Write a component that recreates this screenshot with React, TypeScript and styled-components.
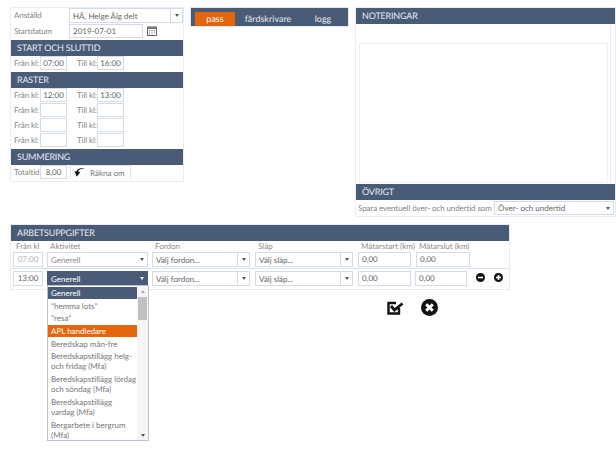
import React, { FunctionComponent } from 'react';
import styled, { createGlobalStyle } from 'styled-components';

const GlobalStyle = createGlobalStyle`
  html, body {
    margin: 0;
    padding: 0;
    background: #fff;
    overflow: hidden;
  }
  body {
    font-family: Lato, "Open Sans", "Liberation Sans", sans-serif;
    font-size: 8px;
    color: #6b6b6b;
    text-rendering: geometricPrecision;
  }
`;

const Page = styled.div`
  width: 616px;
  height: 459px;
  box-sizing: border-box;
  padding: 7px 0 0 10px;
  overflow: hidden;
`;

const TopRow = styled.div`
  display: flex;
  align-items: flex-start;
  gap: 6px;
`;

const Panel = styled.div<{ $width: number }>`
  box-sizing: border-box;
  width: ${p => p.$width}px;
  flex: none;
  border: 1px solid #e9edf1;
  background: #fff;
`;

const Header = styled.div`
  box-sizing: border-box;
  height: 16px;
  line-height: 16px;
  padding-left: 6px;
  background: #4a5b78;
  color: #e6eaf0;
  font-size: 9px;
  letter-spacing: -0.2px;
`;

const FieldRow = styled.div<{ $height?: number }>`
  display: flex;
  align-items: flex-start;
  height: ${p => p.$height ?? 15}px;
`;

const Label = styled.span<{ $width: number; $indent?: number }>`
  width: ${p => p.$width}px;
  padding-left: ${p => p.$indent ?? 0}px;
  box-sizing: border-box;
  flex: none;
  line-height: 14px;
  white-space: nowrap;
  font-size: 8px;
  letter-spacing: -0.1px;
  color: #858585;
`;

const Field = styled.div<{ $width: number; $height?: number; $muted?: boolean }>`
  box-sizing: border-box;
  flex: none;
  width: ${p => p.$width}px;
  height: ${p => p.$height ?? 14}px;
  line-height: ${p => (p.$height ?? 14) - 2}px;
  padding-left: 3px;
  border: 1px solid #d5dbe6;
  background: #fff;
  font-size: 8px;
  color: ${p => (p.$muted ? '#b0b0b0' : '#666')};
  white-space: nowrap;
`;

const TimeField = styled(Field)`
  text-align: center;
  padding-left: 0;
`;

const Arrow = styled.span<{ $light?: boolean; $up?: boolean }>`
  width: 0;
  height: 0;
  border-left: 2.5px solid transparent;
  border-right: 2.5px solid transparent;
  border-top: ${p => (p.$up ? '0' : `3px solid ${p.$light ? '#fff' : '#555'}`)};
  border-bottom: ${p => (p.$up ? '3px solid #aaa' : '0')};
`;

const SelectBox = styled.div<{ $width: number; $height?: number; $dark?: boolean; $muted?: boolean }>`
  box-sizing: border-box;
  flex: none;
  display: flex;
  align-items: stretch;
  width: ${p => p.$width}px;
  height: ${p => p.$height ?? 15}px;
  border: 1px solid ${p => (p.$dark ? '#4a5b78' : '#d5dbe6')};
  background: ${p => (p.$dark ? '#4a5b78' : '#fff')};
  color: ${p => (p.$dark ? '#fff' : p.$muted ? '#8a8a8a' : '#666')};
  font-size: 8px;
`;

const SelectText = styled.span`
  flex: 1;
  padding-left: 3px;
  display: flex;
  align-items: center;
  white-space: nowrap;
`;

const SelectButton = styled.span<{ $split?: boolean }>`
  flex: none;
  width: 11px;
  display: flex;
  align-items: center;
  justify-content: center;
  border-left: ${p => (p.$split ? '1px solid #d5dbe6' : '0')};
`;

const IconSlot = styled.span`
  display: inline-flex;
  margin: 2px 0 0 4px;
`;

const RecalcButton = styled.div`
  box-sizing: border-box;
  width: 61px;
  height: 14px;
  margin-left: 3px;
  display: flex;
  align-items: center;
  gap: 5px;
  padding-left: 3px;
  border: 1px solid #e2e6ec;
  border-bottom: 0;
  font-size: 8px;
  color: #777;
`;

const Tabs = styled.div`
  box-sizing: border-box;
  width: 159px;
  height: 20px;
  flex: none;
  display: flex;
  align-items: flex-end;
  padding: 0 0 0 4px;
  background: #4a5b78;
  border: 1px solid #e3e7ec;
`;

const Tab = styled.div<{ $active?: boolean; $width: number }>`
  width: ${p => p.$width}px;
  height: 14px;
  line-height: 14px;
  text-align: center;
  background: ${p => (p.$active ? '#e3660f' : 'transparent')};
  color: ${p => (p.$active ? '#fff' : '#e6e9ee')};
  font-size: 9px;
`;

const NotesBody = styled.div`
  box-sizing: border-box;
  height: 160px;
  padding: 19px 0 0 3px;
  margin-right: 4px;
  border-right: 1px solid #eef0f3;
`;

const NotesArea = styled.div`
  box-sizing: border-box;
  width: 249px;
  height: 140px;
  border: 1px solid #eef0f3;
`;

const OtherRow = styled.div`
  display: flex;
  align-items: center;
  height: 16px;
  padding-left: 2px;
`;

const TaskPanel = styled(Panel)`
  margin-top: 7px;
  position: relative;
`;

const TaskGrid = styled.div<{ $head?: boolean }>`
  display: flex;
  align-items: ${p => (p.$head ? 'flex-end' : 'flex-start')};
  box-sizing: border-box;
  padding: ${p => (p.$head ? '0 0 1px 2px' : '2px 0 0 2px')};
  height: ${p => (p.$head ? 28 : 20)}px;
  border-bottom: ${p => (p.$head ? '1px solid #dfe3e9' : '0')};
`;

const Column = styled.div<{ $width: number; $gap?: number }>`
  width: ${p => p.$width}px;
  margin-right: ${p => p.$gap ?? 5}px;
  flex: none;
  display: flex;
  flex-direction: column;
`;

const ColumnTitle = styled.span`
  height: 11px;
  line-height: 11px;
  padding-left: 3px;
  font-size: 8px;
  color: #8a8a8a;
  white-space: nowrap;
`;

const RoundButtons = styled.div`
  display: flex;
  gap: 9px;
  margin: 2px 0 0 9px;
`;

const Dropdown = styled.div`
  position: absolute;
  left: 36px;
  top: 60px;
  box-sizing: border-box;
  width: 102px;
  height: 156px;
  display: flex;
  border: 1px solid #b9c2d2;
  background: #fff;
  z-index: 2;
`;

const DropList = styled.div`
  flex: 1;
  overflow: hidden;
  padding-top: 1px;
`;

const DropItem = styled.div<{ $kind?: 'selected' | 'hover' }>`
  padding: 1px 0 1px 3px;
  line-height: 10px;
  margin-bottom: 0.7px;
  font-size: 8px;
  background: ${p => (p.$kind === 'selected' ? '#4a5b78' : p.$kind === 'hover' ? '#e3660f' : 'transparent')};
  color: ${p => (p.$kind ? '#fff' : '#777')};
`;

const Scrollbar = styled.div`
  flex: none;
  width: 11px;
  display: flex;
  flex-direction: column;
  align-items: center;
  padding-top: 4px;
  background: #f5f5f5;
`;

const ScrollThumb = styled.div`
  width: 9px;
  height: 23px;
  margin-top: 4px;
  background: #c1c1c1;
`;

const ScrollEnd = styled.div`
  flex: 1;
  display: flex;
  align-items: flex-end;
  padding-bottom: 3px;
`;

const Actions = styled.div`
  display: flex;
  align-items: center;
  gap: 17px;
  margin: 9px 0 0 377px;
`;

const CalendarIcon = () => (
  <svg width="10" height="10" viewBox="0 0 10 10">
    <rect x="0.5" y="1" width="9" height="8.5" fill="#fff" stroke="#666" />
    <rect x="1" y="1" width="8" height="2" fill="#777" />
    <path d="M2 4.5h1M4.5 4.5h1M7 4.5h1M2 6.2h1M4.5 6.2h1M7 6.2h1M2 8h1M4.5 8h1" stroke="#777" />
  </svg>
);

const BackArrow = () => (
  <svg width="11" height="11" viewBox="0 0 13 12">
    <path d="M12.5 1.5C8 1.2 5.5 2.6 4.8 5.2L7.4 5.4 3.2 11 0.6 4.6 2.8 4.9C3.8 1.6 7.5 0 12.5 1.5Z" fill="#111" />
  </svg>
);

const RoundIcon = ({ plus }: { plus?: boolean }) => (
  <svg width="9" height="9" viewBox="0 0 9 9">
    <circle cx="4.5" cy="4.5" r="4.5" fill="#111" />
    <rect x="2" y="3.7" width="5" height="1.6" fill="#fff" />
    {plus && <rect x="3.7" y="2" width="1.6" height="5" fill="#fff" />}
  </svg>
);

const ConfirmIcon = () => (
  <svg width="17" height="14" viewBox="0 0 17 14">
    <path d="M12 7V12.5H1.5V2H9" fill="none" stroke="#111" strokeWidth="2.4" />
    <path d="M4 5L7.5 9 15.5 2.5" fill="none" stroke="#111" strokeWidth="2.8" />
  </svg>
);

const CancelIcon = () => (
  <svg width="17" height="17" viewBox="0 0 17 17">
    <circle cx="8.5" cy="8.5" r="8.5" fill="#111" />
    <path d="M5.2 5.2L11.8 11.8M11.8 5.2L5.2 11.8" stroke="#fff" strokeWidth="3" />
  </svg>
);

interface TimeRowProps {
  from?: string;
  to?: string;
  height?: number;
}

const TimeRow: FunctionComponent<TimeRowProps> = ({ from, to, height }) => (
  <FieldRow $height={height}>
    <Label $width={29} $indent={3}>Från kl:</Label>
    <TimeField $width={27}>{from}</TimeField>
    <Label $width={30} $indent={10}>Till kl:</Label>
    <TimeField $width={27}>{to}</TimeField>
  </FieldRow>
);

const dropBefore = ['"hemma lots"', '"resa"'];
const dropAfter = [
  'Beredskap mån-fre',
  'Beredskapstillägg helg- och fridag (Mfa)',
  'Beredskapstillägg lördag och söndag (Mfa)',
  'Beredskapstillägg vardag (Mfa)',
  'Bergarbete i bergrum (Mfa)',
];

const App: FunctionComponent = () => (
  <Page>
    <GlobalStyle />
    <TopRow>
      <Panel $width={174}>
        <FieldRow $height={16}>
          <Label $width={58} $indent={3}>Anställd</Label>
          <SelectBox $width={114}>
            <SelectText>HÄ, Helge Älg delt</SelectText>
            <SelectButton $split><Arrow /></SelectButton>
          </SelectBox>
        </FieldRow>
        <FieldRow $height={16}>
          <Label $width={58} $indent={3}>Startdatum</Label>
          <Field $width={74}>2019-07-01</Field>
          <IconSlot><CalendarIcon /></IconSlot>
        </FieldRow>
        <Header>START OCH SLUTTID</Header>
        <TimeRow from="07:00" to="16:00" height={16} />
        <Header>RASTER</Header>
        <TimeRow from="12:00" to="13:00" />
        <TimeRow />
        <TimeRow />
        <TimeRow height={16} />
        <Header>SUMMERING</Header>
        <FieldRow $height={16}>
          <Label $width={29} $indent={3}>Totaltid</Label>
          <TimeField $width={27}>8,00</TimeField>
          <RecalcButton><BackArrow />Räkna om</RecalcButton>
        </FieldRow>
      </Panel>
      <Tabs>
        <Tab $active $width={40}>pass</Tab>
        <Tab $width={66}>färdskrivare</Tab>
        <Tab $width={44}>logg</Tab>
      </Tabs>
      <Panel $width={261}>
        <Header>NOTERINGAR</Header>
        <NotesBody><NotesArea /></NotesBody>
        <Header>ÖVRIGT</Header>
        <OtherRow>
          <Label $width={136}>Spara eventuell över- och undertid som</Label>
          <SelectBox $width={120} $height={14}>
            <SelectText>Över- och undertid</SelectText>
            <SelectButton><Arrow /></SelectButton>
          </SelectBox>
        </OtherRow>
      </Panel>
    </TopRow>
    <TaskPanel $width={500}>
      <Header>ARBETSUPPGIFTER</Header>
      <TaskGrid $head>
        <Column $width={30} $gap={4}>
          <ColumnTitle>Från kl</ColumnTitle>
          <TimeField $width={30} $height={15} $muted>07:00</TimeField>
        </Column>
        <Column $width={101} $gap={4}>
          <ColumnTitle>Aktivitet</ColumnTitle>
          <SelectBox $width={101} $height={15} $muted>
            <SelectText>Generell</SelectText>
            <SelectButton><Arrow /></SelectButton>
          </SelectBox>
        </Column>
        <Column $width={98}>
          <ColumnTitle>Fordon</ColumnTitle>
          <SelectBox $width={98}>
            <SelectText>Välj fordon...</SelectText>
            <SelectButton $split><Arrow /></SelectButton>
          </SelectBox>
        </Column>
        <Column $width={98}>
          <ColumnTitle>Släp</ColumnTitle>
          <SelectBox $width={98}>
            <SelectText>Välj släp...</SelectText>
            <SelectButton $split><Arrow /></SelectButton>
          </SelectBox>
        </Column>
        <Column $width={53}>
          <ColumnTitle>Mätarstart (km)</ColumnTitle>
          <Field $width={53} $height={15}>0,00</Field>
        </Column>
        <Column $width={54}>
          <ColumnTitle>Mätarslut (km)</ColumnTitle>
          <Field $width={54} $height={15}>0,00</Field>
        </Column>
      </TaskGrid>
      <TaskGrid>
        <Column $width={30} $gap={4}>
          <TimeField $width={30} $height={15}>13:00</TimeField>
        </Column>
        <Column $width={101} $gap={4}>
          <SelectBox $width={101} $dark>
            <SelectText>Generell</SelectText>
            <SelectButton><Arrow $light /></SelectButton>
          </SelectBox>
        </Column>
        <Column $width={98}>
          <SelectBox $width={98}>
            <SelectText>Välj fordon...</SelectText>
            <SelectButton $split><Arrow /></SelectButton>
          </SelectBox>
        </Column>
        <Column $width={98}>
          <SelectBox $width={98}>
            <SelectText>Välj släp...</SelectText>
            <SelectButton $split><Arrow /></SelectButton>
          </SelectBox>
        </Column>
        <Column $width={53} $gap={4}>
          <Field $width={53} $height={15}>0,00</Field>
        </Column>
        <Column $width={52} $gap={0}>
          <Field $width={52} $height={15}>0,00</Field>
        </Column>
        <RoundButtons>
          <RoundIcon />
          <RoundIcon plus />
        </RoundButtons>
      </TaskGrid>
      <Dropdown>
        <DropList>
          <DropItem $kind="selected">Generell</DropItem>
          {dropBefore.map(item => <DropItem key={item}>{item}</DropItem>)}
          <DropItem $kind="hover">APL handledare</DropItem>
          {dropAfter.map(item => <DropItem key={item}>{item}</DropItem>)}
        </DropList>
        <Scrollbar>
          <Arrow $up />
          <ScrollThumb />
          <ScrollEnd><Arrow /></ScrollEnd>
        </Scrollbar>
      </Dropdown>
    </TaskPanel>
    <Actions>
      <ConfirmIcon />
      <CancelIcon />
    </Actions>
  </Page>
);

export default App;
